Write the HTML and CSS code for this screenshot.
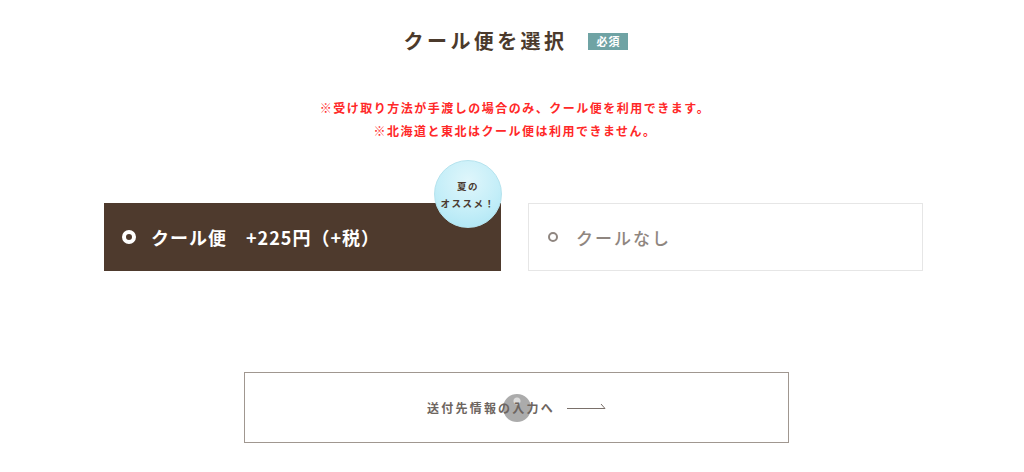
FILE: index.html
```html
<!DOCTYPE html>
<html lang="ja">
<head>
<meta charset="utf-8">
<link rel="stylesheet" href="styles.css">
</head>
<body>
<main class="page">
  <h2 class="heading">
    <span class="heading-text">クール便を選択</span>
    <span class="required">必須</span>
  </h2>
  <div class="notes">
    <p>※受け取り方法が手渡しの場合のみ、クール便を利用できます。</p>
    <p>※北海道と東北はクール便は利用できません。</p>
  </div>
  <div class="options">
    <label class="option option-selected">
      <span class="radio radio-on"></span>
      <span class="option-label">クール便　+225円（+税）</span>
      <span class="promo">夏の<br>オススメ！</span>
    </label>
    <label class="option option-plain">
      <span class="radio radio-off"></span>
      <span class="option-label">クールなし</span>
    </label>
  </div>
  <div class="action">
    <a class="next-btn">
      <span class="touch"></span>
      <span class="next-text">送付先情報の入力へ</span>
      <svg class="arrow" width="40" height="8" viewBox="0 0 40 8"><path d="M0 6.5H38L34 2" fill="none" stroke="#7a706a" stroke-width="1"/></svg>
    </a>
  </div>
</main>
</body>
</html>
```

FILE: styles.css
```css
* { box-sizing: border-box; }
body {
  margin: 0;
  background: #fff;
  font-family: "Noto Sans CJK JP", "Noto Sans", sans-serif;
}
.page {
  width: 1024px;
  padding-top: 25px;
  display: flex;
  flex-direction: column;
  align-items: center;
}
.heading {
  margin: 0;
  display: flex;
  align-items: center;
  gap: 21px;
  height: 32px;
  padding-left: 8px;
  transform: translateY(-1px);
}
.heading-text {
  font-size: 20px;
  font-weight: 700;
  letter-spacing: 3.4px;
  color: #4b3a2c;
}
.required {
  background: #6fa3a4;
  color: #fff;
  font-size: 11px;
  font-weight: 700;
  padding: 0 8px;
  line-height: 17px;
  height: 17px;
  letter-spacing: 1px;
  margin-top: 2px;
}
.notes {
  margin-top: 39px;
  text-align: center;
  color: #ff2828;
  font-size: 12px;
  font-weight: 700;
  letter-spacing: 1.5px;
  line-height: 23px;
  padding-left: 6px;
}
.notes p { margin: 0; }
.options {
  margin-top: 61px;
  display: flex;
  gap: 27px;
  padding-left: 3px;
}
.option {
  position: relative;
  height: 68px;
  display: flex;
  align-items: center;
  padding-left: 18px;
  font-size: 18px;
  font-weight: 700;
}
.option-selected {
  width: 397px;
  background: #4e3a2d;
  color: #fff;
}
.option-plain {
  width: 395px;
  border: 1px solid #e6e6e6;
  color: #8f8680;
  font-size: 17px;
  font-weight: 500;
  letter-spacing: 2px;
  padding-left: 19px;
}
.radio {
  width: 14px;
  height: 14px;
  border-radius: 50%;
  flex: none;
  margin-right: 15px;
}
.radio-on {
  background: #4e3a2d;
  border: 4px solid #fff;
}
.radio-off {
  width: 10px;
  height: 10px;
  border: 2px solid #8f8680;
  margin-right: 18px;
}
.option-label { line-height: 1; }
.option-selected .option-label { letter-spacing: 1px; }
.promo {
  position: absolute;
  right: -1px;
  top: -43px;
  width: 68px;
  height: 68px;
  border-radius: 50%;
  background: radial-gradient(circle at 50% 30%, #dff6fb 0%, #c4eef8 55%, #a9e4f4 100%);
  border: 1px solid #b5e3ee;
  color: #4a3a30;
  font-size: 9.5px;
  font-weight: 700;
  line-height: 17px;
  letter-spacing: 1.5px;
  text-align: center;
  display: flex;
  align-items: center;
  justify-content: center;
  padding-top: 1px;
}
.action {
  margin-top: 101px;
  padding-left: 8px;
}
.next-btn {
  position: relative;
  width: 545px;
  height: 71px;
  border: 1px solid #a09790;
  display: flex;
  align-items: center;
  justify-content: center;
  gap: 12px;
  padding-left: 2px;
}
.next-text {
  position: relative;
  font-size: 12px;
  font-weight: 700;
  letter-spacing: 2.2px;
  color: #6d6560;
}
.arrow { margin-top: -3px; }
.touch {
  position: absolute;
  left: 258px;
  top: 21px;
  width: 28px;
  height: 28px;
  border-radius: 50%;
  background: radial-gradient(circle at 50% 25%, #dcdcdc 0 3px, #ababab 4px);
}
```
